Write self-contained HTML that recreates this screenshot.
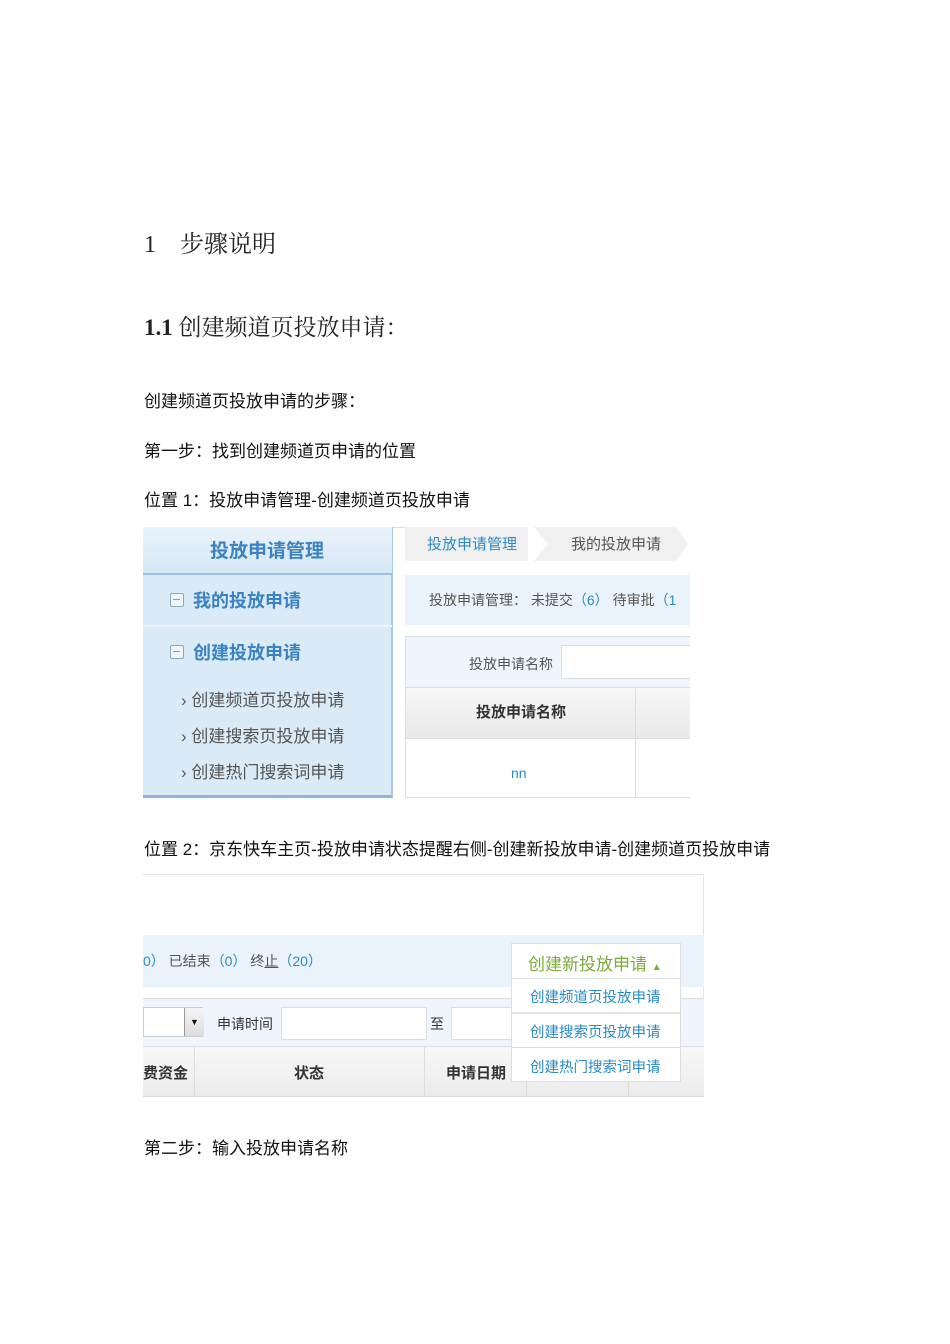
<!DOCTYPE html>
<html><head><meta charset="utf-8"><style>
body{margin:0;width:950px;height:1344px;background:#fff;position:relative;font-family:"Liberation Sans","Noto Sans CJK SC",sans-serif;color:#111;overflow:hidden}
.a{position:absolute;white-space:nowrap}
.t{font-size:17px}
.ser{font-family:"Liberation Serif","Noto Serif CJK SC",serif}
.g{color:#555;font-size:15px}
.b{color:#2a8bc8}
</style></head><body>
<div class="a ser" style="left:144px;top:224px;font-size:24px;color:#222">1&nbsp;&nbsp;&nbsp;&nbsp;步骤说明</div>
<div class="a ser" style="left:144px;top:309px;font-size:23px;color:#222"><b>1.1</b> 创建频道页投放申请：</div>
<div class="a t" style="left:144px;top:387px">创建频道页投放申请的步骤：</div>
<div class="a t" style="left:144px;top:437px">第一步：找到创建频道页申请的位置</div>
<div class="a t" style="left:144px;top:486px">位置 1：投放申请管理-创建频道页投放申请</div>

<!-- screenshot 1 -->
<div class="a" style="left:143px;top:527px;width:547px;height:271px;background:#fff;border-top:1px solid #ddd"></div>
<div class="a" style="left:143px;top:527px;width:250px;height:271px;background:#dbeaf7;border-right:2px solid #a9c8e8;border-bottom:3px solid #8fb5dc;box-sizing:border-box"></div>
<div class="a" style="left:143px;top:527px;width:249px;height:46px;background:linear-gradient(#eaf3fb,#d6e7f6);border-bottom:2px solid #9cc0e2"></div>
<div class="a" style="left:210px;top:536px;font-size:19px;font-weight:bold;color:#3a82c4">投放申请管理</div>
<div class="a" style="left:143px;top:625px;width:249px;height:2px;background:#eef5fc"></div>
<div class="a" style="left:170px;top:593px;width:12px;height:12px;border:1px solid #8ab;border-radius:2px;background:#eef5fb"></div><div class="a" style="left:173px;top:599px;width:7px;height:1px;background:#6a9"></div>
<div class="a" style="left:193px;top:587px;font-size:18px;font-weight:bold;color:#3a82c4">我的投放申请</div>
<div class="a" style="left:170px;top:645px;width:12px;height:12px;border:1px solid #8ab;border-radius:2px;background:#eef5fb"></div><div class="a" style="left:173px;top:651px;width:7px;height:1px;background:#6a9"></div>
<div class="a" style="left:193px;top:639px;font-size:18px;font-weight:bold;color:#3a82c4">创建投放申请</div>
<div class="a g" style="left:181px;top:686px;font-size:17px">› 创建频道页投放申请</div>
<div class="a g" style="left:181px;top:722px;font-size:17px">› 创建搜索页投放申请</div>
<div class="a g" style="left:181px;top:758px;font-size:17px">› 创建热门搜索词申请</div>

<div class="a" style="left:405px;top:527px;width:285px;height:34px;background:#f0f0f0"></div>
<svg class="a" style="left:528px;top:527px" width="162" height="34"><polygon points="0,0 6,0 20,17 6,34 0,34" fill="#fff"/><polygon points="148,0 162,0 162,34 148,34 160,17" fill="#fff"/></svg>
<div class="a b" style="left:427px;top:533px;font-size:15px">投放申请管理</div>
<div class="a g" style="left:571px;top:533px;font-size:15px">我的投放申请</div>
<div class="a" style="left:405px;top:575px;width:285px;height:50px;background:#eaf3fb"></div>
<div class="a g" style="left:429px;top:590px;font-size:14px">投放申请管理： 未提交<span class="b">（6）</span> 待审批<span class="b">（1</span></div>
<div class="a" style="left:405px;top:636px;width:285px;height:162px;border:1px solid #ddd;border-right:none;box-sizing:border-box;background:#fff;overflow:hidden"></div>
<div class="a" style="left:406px;top:637px;width:284px;height:50px;background:#eef5fc"></div>
<div class="a g" style="left:469px;top:654px;font-size:14px">投放申请名称</div>
<div class="a" style="left:561px;top:645px;width:129px;height:34px;background:#fff;border:1px solid #ddd;border-right:none;box-sizing:border-box"></div>
<div class="a" style="left:406px;top:687px;width:284px;height:50px;background:linear-gradient(#f7f7f7,#e9e9e9);border-top:1px solid #ddd;border-bottom:1px solid #ddd"></div>
<div class="a" style="left:635px;top:687px;width:1px;height:111px;background:#ddd"></div>
<div class="a" style="left:476px;top:701px;font-size:15px;font-weight:bold;color:#333">投放申请名称</div>
<div class="a b" style="left:511px;top:765px;font-size:14px">nn</div>

<div class="a t" style="left:144px;top:835px">位置 2：京东快车主页-投放申请状态提醒右侧-创建新投放申请-创建频道页投放申请</div>

<!-- screenshot 2 -->
<div class="a" style="left:143px;top:874px;width:561px;height:223px;border-top:1px solid #e5e5e5;border-right:1px solid #e5e5e5;box-sizing:border-box"></div>
<div class="a" style="left:143px;top:935px;width:561px;height:52px;background:#eaf3fb"></div>
<div class="a g" style="left:143px;top:951px;font-size:14px"><span class="b">0）</span> 已结束<span class="b">（0）</span> 终<u>止</u><span class="b">（20）</span></div>
<div class="a" style="left:143px;top:998px;width:561px;height:48px;background:#eef5fc;border-top:1px solid #ddd"></div>
<div class="a" style="left:143px;top:1007px;width:60px;height:30px;background:#fff;border:1px solid #ccc;box-sizing:border-box"></div>
<div class="a" style="left:184px;top:1008px;width:19px;height:28px;background:linear-gradient(#f5f5f5,#ddd);border-left:1px solid #999;font-size:9px;text-align:center;line-height:28px">▼</div>
<div class="a g" style="left:217px;top:1014px;font-size:14px;color:#333">申请时间</div>
<div class="a" style="left:281px;top:1007px;width:144px;height:31px;background:#fff;border:1px solid #ddd"></div>
<div class="a g" style="left:430px;top:1014px;font-size:14px;color:#333">至</div>
<div class="a" style="left:451px;top:1007px;width:70px;height:31px;background:#fff;border:1px solid #ddd"></div>
<div class="a" style="left:143px;top:1046px;width:561px;height:51px;background:linear-gradient(#f8f8f8,#ebebeb);border-top:1px solid #ddd;border-bottom:1px solid #ddd;box-sizing:border-box"></div>
<div class="a" style="left:194px;top:1046px;width:1px;height:51px;background:#ddd"></div>
<div class="a" style="left:424px;top:1046px;width:1px;height:51px;background:#ddd"></div>
<div class="a" style="left:526px;top:1046px;width:1px;height:51px;background:#ddd"></div>
<div class="a" style="left:628px;top:1046px;width:1px;height:51px;background:#ddd"></div>
<div class="a" style="left:143px;top:1062px;font-size:15px;font-weight:bold;color:#333">费资金</div>
<div class="a" style="left:294px;top:1062px;font-size:15px;font-weight:bold;color:#333">状态</div>
<div class="a" style="left:446px;top:1062px;font-size:15px;font-weight:bold;color:#333">申请日期</div>
<div class="a" style="left:511px;top:943px;width:170px;height:139px;background:#fff;border:1px solid #ddd;box-sizing:border-box"></div>
<div class="a" style="left:512px;top:978px;width:168px;height:1px;background:#ddd"></div>
<div class="a" style="left:512px;top:1012px;width:168px;height:2px;background:#e5e5e5"></div>
<div class="a" style="left:512px;top:1047px;width:168px;height:1px;background:#ddd"></div>
<div class="a" style="left:528px;top:950px;font-size:17px;color:#7bab3a">创建新投放申请 <span style="font-size:10px">▲</span></div>
<div class="a b" style="left:530px;top:986px;font-size:14.5px">创建频道页投放申请</div>
<div class="a b" style="left:530px;top:1021px;font-size:14.5px">创建搜索页投放申请</div>
<div class="a b" style="left:530px;top:1056px;font-size:14.5px">创建热门搜索词申请</div>

<div class="a t" style="left:144px;top:1134px">第二步：输入投放申请名称</div>
</body></html>
